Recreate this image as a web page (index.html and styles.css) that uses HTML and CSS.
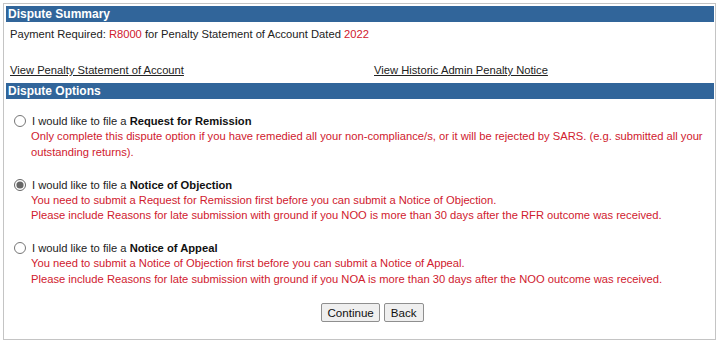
FILE: index.html
```html
<!DOCTYPE html>
<html>
<head>
	<title>Dispute Options</title>
	<link rel="stylesheet" href="styles.css">
</head>
<body>
<div class="panel">
	<div class="bar">Dispute Summary</div>
	<div class="summary">
		Payment Required: <span class="red">R8000</span> for Penalty Statement of Account Dated <span class="red">2022</span>
	</div>
	<div class="links">
		<a href="javascript:void(0)">View Penalty Statement of Account</a>
		<a href="javascript:void(0)">View Historic Admin Penalty Notice</a>
	</div>
	<div class="bar">Dispute Options</div>
	<ul class="options">
		<li>
			<label><input type="radio" name="opt">I would like to file a <b>Request for Remission</b></label>
			<p class="red">Only complete this dispute option if you have remedied all your non-compliance/s, or it will be rejected by SARS. (e.g. submitted all your outstanding returns).</p>
		</li>
		<li>
			<label><input type="radio" name="opt" checked>I would like to file a <b>Notice of Objection</b></label>
			<p class="red">You need to submit a Request for Remission first before you can submit a Notice of Objection.</p>
			<p class="red">Please include Reasons for late submission with ground if you NOO is more than 30 days after the RFR outcome was received.</p>
		</li>
		<li>
			<label><input type="radio" name="opt">I would like to file a <b>Notice of Appeal</b></label>
			<p class="red">You need to submit a Notice of Objection first before you can submit a Notice of Appeal.</p>
			<p class="red">Please include Reasons for late submission with ground if you NOA is more than 30 days after the NOO outcome was received.</p>
		</li>
	</ul>
	<div class="buttons">
		<button>Continue</button>
		<button class="back">Back</button>
	</div>
</div>
</body>
</html>
```

FILE: styles.css
```css
* {
	padding: 0px;
	margin: 0px;
}
li {
	list-style: none;
}
body {
	font-family: "Liberation Sans", Arial, sans-serif;
	font-size: 11.2px;
	color: #222;
	background: #fff;
}
.red {
	color: #d0202e;
}
.panel {
	margin: 3px 11px 0 3px;
	height: 337px;
	border: 1px solid #c4c4c4;
	padding: 2px 1px 0 2px;
	box-sizing: border-box;
}
.bar {
	height: 16px;
	line-height: 16px;
	background: #31659a;
	color: #fff;
	font-weight: bold;
	font-size: 12px;
	padding-left: 2px;
}
.summary {
	padding: 4px 0 0 4px;
	height: 20px;
	line-height: 16px;
}
.links {
	display: grid;
	grid-template-columns: 364px 1fr;
	padding: 16px 0 0 4px;
	height: 37px;
	box-sizing: border-box;
	line-height: 16px;
}
.links a {
	color: #222;
	text-decoration: underline;
}
.options {
	padding: 14px 0 0 7px;
}
.options li {
	height: 63.5px;
}
.options label {
	display: block;
	height: 16px;
	line-height: 16px;
}
.options label b {
	color: #111;
}
.options input {
	width: 12px;
	height: 12px;
	margin: 0 6px 0 1px;
	vertical-align: -2px;
	accent-color: #666;
}
.options p {
	padding-left: 18px;
	line-height: 15.5px;
}
.buttons {
	display: flex;
	justify-content: center;
	gap: 4px;
	padding: 0 0 0 25px;
	margin-top: -1px;
}
.buttons button {
	font-family: "Liberation Sans", Arial, sans-serif;
	font-size: 11.6px;
	color: #111;
	height: 19px;
	padding: 0 5px;
	background: #efefef;
	border: 1px solid #8f8f8f;
	border-radius: 2px;
}
.buttons .back {
	padding: 0 6px;
}
```
